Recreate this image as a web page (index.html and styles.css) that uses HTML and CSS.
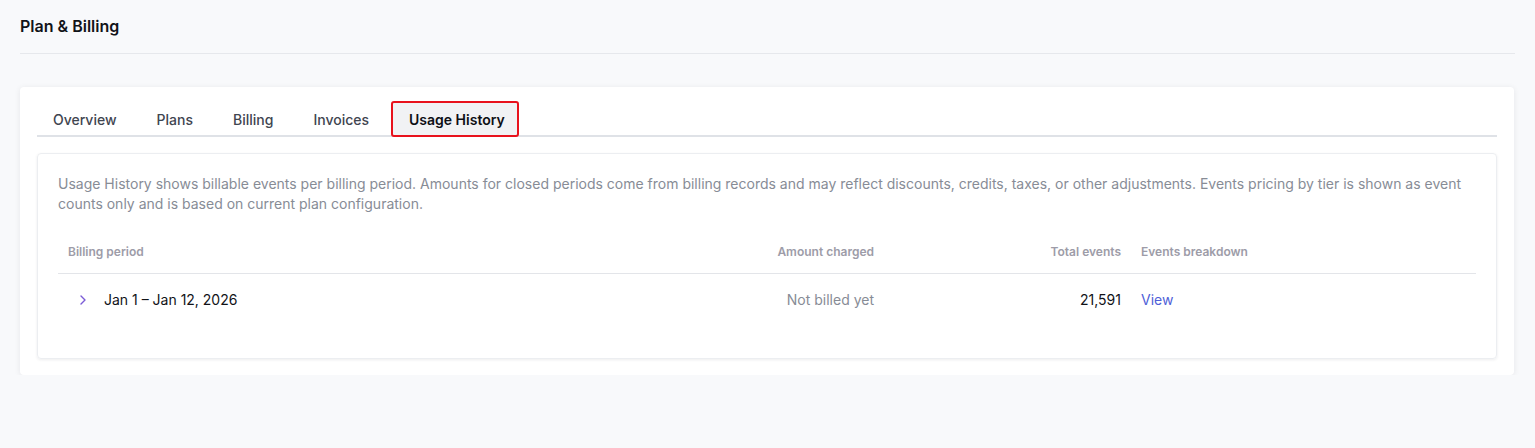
FILE: index.html
```html
<!DOCTYPE html>
<html lang="en">
<head>
    <meta charset="UTF-8">
    <meta name="viewport" content="width=device-width, initial-scale=1.0">
    <link rel="stylesheet" href="styles.css">
    <title>Plan &amp; Billing</title>
</head>
<body class="page">
    <div class="pagehead">
        <h1 class="pagetitle">Plan &amp; Billing</h1>
    </div>

    <div class="card">
        <div class="tabs">
            <div class="tab">Overview</div>
            <div class="tab">Plans</div>
            <div class="tab">Billing</div>
            <div class="tab">Invoices</div>
            <div class="tab active">Usage History</div>
        </div>

        <div class="panel">
            <p class="note">Usage History shows billable events per billing period. Amounts for closed periods come from billing records and may reflect discounts, credits, taxes, or other adjustments. Events pricing by tier is shown as event counts only and is based on current plan configuration.</p>

            <table class="usage">
                <thead>
                    <tr>
                        <th class="c-period">Billing period</th>
                        <th class="c-amount">Amount charged</th>
                        <th class="c-total">Total events</th>
                        <th class="c-break">Events breakdown</th>
                    </tr>
                </thead>
                <tbody>
                    <tr>
                        <td class="c-period">
                            <span class="chev">
                                <svg width="14" height="14" viewBox="0 0 14 14"><path d="M5 3l4 4-4 4" fill="none" stroke="#7b5cd6" stroke-width="1.4" stroke-linecap="round" stroke-linejoin="round"/></svg>
                            </span>
                            Jan 1 – Jan 12, 2026
                        </td>
                        <td class="c-amount muted">Not billed yet</td>
                        <td class="c-total">21,591</td>
                        <td class="c-break"><a class="link" href="#">View</a></td>
                    </tr>
                </tbody>
            </table>
        </div>
    </div>
</body>
</html>
```

FILE: styles.css
```css
*{
    margin: 0;
    padding: 0;
    box-sizing: border-box;
}
:root{
    --text: #111318;
    --muted: #878c96;
    --line: #e3e5e9;
}
.page{
    background: #f8f9fb;
    font-family: Inter, "Noto Sans", sans-serif;
    color: var(--text);
    padding: 0 20px;
}
.pagehead{
    padding: 16px 0 17px;
    border-bottom: 1px solid #e6e8ec;
    margin-bottom: 33px;
}
.pagetitle{
    font-size: 16px;
    line-height: 20px;
    font-weight: 600;
}
.card{
    background: #fff;
    border-radius: 4px;
    margin-right: 1px;
    padding: 16px 17px 16px;
    box-shadow: 0 1px 6px rgba(20, 24, 40, 0.08);
}
.tabs{
    display: flex;
    gap: 8px;
    border-bottom: 2px solid #dfe2e7;
}
.tab{
    padding: 1px 16px 0;
    height: 32px;
    line-height: 32px;
    font-size: 14px;
    font-weight: 500;
    color: #3f4550;
}
.tab.active{
    background: #f1f2f4;
    color: #0d0f14;
    font-weight: 600;
    padding: 1px 12px 0 16px;
    outline: 2px solid #e8121c;
    border-radius: 1px;
    margin-bottom: -1px;
}
.panel{
    margin-top: 16px;
    border: 1px solid #eceef1;
    border-radius: 4px;
    box-shadow: 0 1px 3px rgba(20, 24, 40, 0.08);
    padding: 20px 20px 35px;
}
.note{
    font-size: 14px;
    line-height: 20px;
    color: var(--muted);
}
.usage{
    width: 100%;
    margin-top: 17px;
    border-collapse: collapse;
    table-layout: fixed;
}
.usage th{
    font-size: 12px;
    font-weight: 600;
    color: #9d9ca8;
    height: 42px;
    padding: 0 10px;
    border-bottom: 1px solid var(--line);
}
.usage td{
    font-size: 14px;
    height: 50px;
    padding: 2px 10px 0;
}
.c-period{ text-align: left; }
.c-amount{ width: 200px; text-align: right; }
.c-total{ width: 247px; text-align: right; }
.c-break{ width: 345px; text-align: left; }
td.c-period{
    padding-left: 18px;
}
.chev{
    display: inline-block;
    width: 14px;
    height: 14px;
    vertical-align: -2px;
    margin-right: 10px;
}
.muted{
    color: var(--muted);
}
.link{
    color: #4f5fd8;
    text-decoration: none;
}
```
